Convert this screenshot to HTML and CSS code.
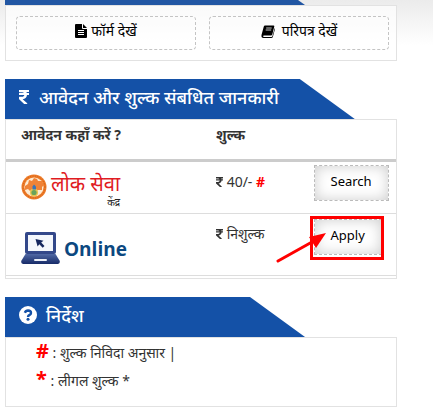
FILE: index.html
```html
<!DOCTYPE html>
<html lang="hi">
<head>
    <meta charset="UTF-8">
    <meta name="viewport" content="width=device-width, initial-scale=1.0">
    <title>आवेदन और शुल्क संबधित जानकारी</title>
    <link rel="stylesheet" href="styles.css">
</head>
<body>
    <svg class="sprite" width="0" height="0" aria-hidden="true">
        <symbol id="rupee" viewBox="0 0 320 512">
            <path d="M308 96c6.600 0 12-5.400 12-12V44c0-6.600-5.400-12-12-12H12C5.400 32 0 37.400 0 44v44.700c0 6.600 5.400 12 12 12h85.300c27.300 0 48.300 10.300 60.600 27.300H12c-6.600 0-12 5.400-12 12v40c0 6.600 5.400 12 12 12h158.800c-6.200 36.100-33 58.600-74.800 58.600H12c-6.600 0-12 5.400-12 12v53c0 3.300 1.400 6.500 3.900 8.800L165 476.900a12 12 0 0 0 8.100 3.100h82.600c10.900 0 16.100-13.500 8-20.900L116.900 324.900c76.200-3.200 130.500-53.300 138.800-132.900H308c6.600 0 12-5.400 12-12v-40c0-6.600-5.400-12-12-12h-58.700a127 127 0 0 0-12.800-32z"/>
        </symbol>
    </svg>

    <div class="page">
        <section class="panel">
            <div class="panel-strip"></div>
            <div class="panel-body link-row">
                <a class="dashed-link" href="#">
                    <svg class="icon-file" viewBox="0 0 12 14" aria-hidden="true">
                        <path fill="#000" d="M0 1q0-1 1-1h6v4q0 1 1 1h4v8q0 1-1 1H1q-1 0-1-1zM8 0l4 4H8z"/>
                        <path stroke="#fff" d="M3 6.500h6M3 8.500h6M3 10.500h6"/>
                    </svg>
                    <span>फॉर्म देखें</span>
                </a>
                <a class="dashed-link" href="#">
                    <svg class="icon-book" viewBox="0 0 14 13" aria-hidden="true">
                        <path fill="#000" d="M4 .5h8.500q1 0 .8 1l-2 8q-.3 1-1.300 1H3q-1 0-.9.800.1.700.9.700h7.500q.6 0 .9-.800l2.300-8.200.3 1-2.100 7.800q-.4 1.200-1.600 1.200H2.500Q0 13 .5 10L2.800 1.500Q3.100.5 4 .5z"/>
                        <path stroke="#fff" stroke-width=".8" d="M5.200 3h5.500M4.700 5h5.500"/>
                    </svg>
                    <span class="spaced">परिपत्र देखें</span>
                </a>
            </div>
        </section>

        <section class="panel">
            <h2 class="panel-title"><svg class="title-rupee" aria-hidden="true"><use href="#rupee"/></svg>आवेदन और शुल्क संबधित जानकारी</h2>
            <div class="panel-body">
                <table class="fee-table">
                    <thead>
                        <tr>
                            <th class="col-place">आवेदन कहाँ करें ?</th>
                            <th class="col-fee">शुल्क</th>
                            <th></th>
                        </tr>
                    </thead>
                    <tbody>
                        <tr class="row-center">
                            <td>
                                <div class="logo">
                                    <svg class="logo-seal" viewBox="0 0 26 26" aria-hidden="true">
                                        <circle cx="13" cy="13" r="12.500" fill="#ee7a26"/>
                                        <circle cx="13" cy="13" r="11" fill="none" stroke="#c9601f" stroke-dasharray="1 1.500"/>
                                        <circle cx="13" cy="13" r="9.600" fill="#fdebd2"/>
                                        <path fill="#f08337" d="M4 12l3-2 1-4 3 1 2-3 3 1 1 2 4 0 2 4-2 2 0 3-4 0-3 1-2-2-3 2-2-2-3 1z"/>
                                        <circle cx="13" cy="18.500" r="4" fill="#e8c34c"/>
                                        <circle cx="13" cy="18.500" r="2.600" fill="#69a35a"/>
                                        <path fill="#3a76b8" d="M11.500 12.500l1.500-2 2 2v3h-3.500z"/>
                                    </svg>
                                    <div class="logo-words">
                                        <span class="logo-main">लोक सेवा</span>
                                        <span class="logo-sub">केंद्र</span>
                                    </div>
                                </div>
                            </td>
                            <td><svg class="rupee" role="img" aria-label="₹"><use href="#rupee"/></svg> 40/- <b class="mark">#</b></td>
                            <td><button type="button" class="action-btn">Search</button></td>
                        </tr>
                        <tr class="row-online">
                            <td>
                                <div class="logo">
                                    <svg class="logo-laptop" viewBox="0 0 39 33" aria-hidden="true">
                                        <defs>
                                            <linearGradient id="base" x2="0" y2="1">
                                                <stop offset="0" stop-color="#5068a4"/>
                                                <stop offset="1" stop-color="#172b68"/>
                                            </linearGradient>
                                        </defs>
                                        <rect x="4" y="0" width="31" height="22" rx="2" fill="#33488a"/>
                                        <rect x="7" y="3" width="25" height="16" fill="#f4f7fc"/>
                                        <path fill="#15275f" d="M14.500 7l8 1.800-2.300 1.700 3.300 3.500-1.800 1.800-3.400-3.500-1.700 2.200z"/>
                                        <path fill="url(#base)" d="M4.500 22h30l4.300 7q.2 3-2.300 3h-34Q0 32 .2 29z"/>
                                        <rect x="13" y="27" width="13" height="2" rx="1" fill="#eef2fa"/>
                                    </svg>
                                    <span class="logo-online">Online</span>
                                </div>
                            </td>
                            <td><svg class="rupee" role="img" aria-label="₹"><use href="#rupee"/></svg> निशुल्क</td>
                            <td>
                                <div class="marked">
                                    <button type="button" class="action-btn">Apply</button>
                                    <svg class="callout" viewBox="0 0 108 50" aria-hidden="true">
                                        <rect x="35.500" y="2.500" width="71" height="41" fill="none" stroke="#f00" stroke-width="3"/>
                                        <path stroke="#f00" stroke-width="3" stroke-linecap="round" d="M2 46l34-19"/>
                                        <path fill="#f00" d="M50 18L33 22l7 11z"/>
                                    </svg>
                                </div>
                            </td>
                        </tr>
                    </tbody>
                </table>
            </div>
        </section>

        <section class="panel">
            <h2 class="panel-title"><svg class="icon-help" viewBox="0 0 18 18" aria-hidden="true">
                    <circle cx="9" cy="9" r="9" fill="#fff"/>
                    <path fill="none" stroke="#1451a7" stroke-width="2.400" d="M5.800 6.800Q6.700 4.500 9 4.500q3 .1 3 2.400 0 1.200-1.400 2Q9 9.700 9 11"/>
                    <circle cx="9" cy="13.300" r="1.500" fill="#1451a7"/>
                </svg>निर्देश</h2>
            <div class="panel-body notes">
                <p><b class="note-mark">#</b> : शुल्क निविदा अनुसार |</p>
                <p><b class="note-mark">*</b> : लीगल शुल्क *</p>
            </div>
        </section>
    </div>
</body>
</html>
```
FILE: styles.css
```css
* {
    box-sizing: border-box;
}

body {
    margin: 0;
    background: #fff linear-gradient(#ebebeb, #fff 45px) no-repeat;
    font-family: "Noto Sans", "Noto Sans Devanagari", sans-serif;
    font-size: 14px;
    line-height: 20px;
    color: #333;
}

.sprite {
    position: absolute;
}

.page {
    display: flex;
    flex-direction: column;
    gap: 18px;
    padding: 0 36px 0 5px;
}

.panel-strip {
    width: 300px;
    height: 5px;
    background: #2156a3;
    clip-path: polygon(0 0, calc(100% - 7px) 0, 100% 100%, 0 100%);
}

.panel-title {
    display: flex;
    align-items: center;
    width: fit-content;
    min-width: 300px;
    height: 40px;
    margin: 0;
    padding: 0 76px 4px 14px;
    background: #1451a7;
    clip-path: polygon(0 0, calc(100% - 55px) 0, 100% 100%, 0 100%);
    color: #fff;
    font-size: 18px;
    font-weight: 500;
    white-space: nowrap;
}

.title-rupee {
    width: 10px;
    height: 16px;
    margin-right: 10px;
    fill: #fff;
}

.icon-help {
    width: 18px;
    height: 18px;
    margin-right: 9px;
}

.panel-body {
    border: 1px solid #e2e2e2;
    background: rgba(255, 255, 255, 0.7);
}

.link-row {
    display: flex;
    gap: 13px;
    padding: 10px 7px 10px 10px;
}

.dashed-link {
    flex: 1;
    display: flex;
    justify-content: center;
    align-items: center;
    gap: 4px;
    height: 34px;
    padding-bottom: 4px;
    border: 1px dashed #c4c4c4;
    border-radius: 4px;
    color: #000;
    text-decoration: none;
}

.icon-file {
    width: 12px;
    height: 14px;
    fill: none;
}

.icon-book {
    width: 14px;
    height: 13px;
    fill: none;
}

.spaced {
    padding-left: 3px;
}

.fee-table {
    width: 100%;
    margin-bottom: 2px;
    border-collapse: separate;
    border-spacing: 0;
    table-layout: fixed;
}

.fee-table th {
    height: 42px;
    padding: 5px 0 0 15px;
    border-bottom: 3px solid #ccc;
    text-align: left;
    vertical-align: top;
    font-weight: 700;
}

.col-place {
    width: 50%;
}

.col-fee {
    width: 25%;
}

.fee-table td {
    padding: 3px 0 0 15px;
    border-bottom: 1px solid #ddd;
    vertical-align: top;
}

.fee-table td:nth-child(2) {
    padding-top: 10px;
}

.row-center td {
    height: 52px;
}

.row-online td {
    height: 62px;
}

.rupee {
    width: 7px;
    height: 12px;
    vertical-align: -1px;
    fill: #333;
}

.mark {
    color: #f00;
}

.action-btn {
    height: 36px;
    padding: 0 16px 4px;
    border: 1px dashed #bbb;
    background: #fff;
    box-shadow: inset 0 0 14px #ccc;
    color: #000;
    font-family: inherit;
    font-size: 13px;
}

.marked {
    position: relative;
    padding-top: 2px;
}

.callout {
    position: absolute;
    top: -2px;
    left: -38px;
    width: 108px;
    height: 50px;
}

.logo {
    display: flex;
    gap: 4px;
    padding-top: 9px;
}

.row-online .logo {
    padding-top: 15px;
}

.logo-seal {
    width: 26px;
    height: 26px;
}

.logo-words {
    display: flex;
    flex-direction: column;
}

.logo-main {
    color: #e01b22;
    font-size: 20px;
}

.logo-sub {
    align-self: flex-end;
    color: #222;
    font-size: 10px;
    line-height: 16px;
}

.logo-laptop {
    width: 39px;
    height: 33px;
}

.logo-online {
    color: #0c4880;
    font-family: "Open Sans", "Noto Sans", sans-serif;
    font-size: 19px;
    font-weight: 700;
    line-height: 34px;
}

.notes {
    min-height: 70px;
    padding: 1px 30px;
}

.notes p {
    margin: 0;
    line-height: 28px;
}

.note-mark {
    color: #f00;
    font-size: 20px;
    line-height: 20px;
}
```
